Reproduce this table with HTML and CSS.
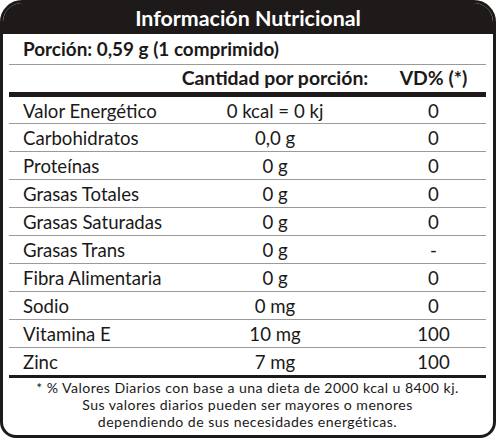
FILE: index.html
```html
<!DOCTYPE html>
<html lang="es">
<head>
<meta charset="utf-8">
<title>Información Nutricional</title>
<link rel="stylesheet" href="styles.css">
</head>
<body>
<div class="label">
  <div class="title">Información Nutricional</div>
  <div class="content">
    <div class="portion">Porción: 0,59 g (1 comprimido)</div>
    <div class="row head">
      <span></span>
      <span class="mid">Cantidad por porción:</span>
      <span class="vd">VD% (*)</span>
    </div>
    <div class="rows">
      <div class="row"><span class="name">Valor Energético</span><span class="mid">0 kcal = 0 kj</span><span class="vd">0</span></div>
      <div class="row"><span class="name">Carbohidratos</span><span class="mid">0,0 g</span><span class="vd">0</span></div>
      <div class="row"><span class="name">Proteínas</span><span class="mid">0 g</span><span class="vd">0</span></div>
      <div class="row"><span class="name">Grasas Totales</span><span class="mid">0 g</span><span class="vd">0</span></div>
      <div class="row"><span class="name">Grasas Saturadas</span><span class="mid">0 g</span><span class="vd">0</span></div>
      <div class="row"><span class="name">Grasas Trans</span><span class="mid">0 g</span><span class="vd">-</span></div>
      <div class="row"><span class="name">Fibra Alimentaria</span><span class="mid">0 g</span><span class="vd">0</span></div>
      <div class="row"><span class="name">Sodio</span><span class="mid">0 mg</span><span class="vd">0</span></div>
      <div class="row"><span class="name">Vitamina E</span><span class="mid">10 mg</span><span class="vd">100</span></div>
      <div class="row"><span class="name">Zinc</span><span class="mid">7 mg</span><span class="vd">100</span></div>
    </div>
    <div class="foot">
      <div>* % Valores Diarios con base a una dieta de 2000 kcal u 8400 kj.</div>
      <div>Sus valores diarios pueden ser mayores o menores</div>
      <div>dependiendo de sus necesidades energéticas.</div>
    </div>
  </div>
</div>
</body>
</html>
```
FILE: styles.css
```css
html, body {
  margin: 0;
  padding: 0;
  background: #ffffff;
}
body {
  font-family: Lato, "Open Sans", sans-serif;
  color: #1b1918;
}
.label {
  box-sizing: border-box;
  width: 496px;
  height: 438px;
  border: 3px solid #1d1a19;
  border-radius: 22px 22px 16px 16px;
  overflow: hidden;
  background: #fff;
}
.title {
  height: 31px;
  background: #1d1a19;
  color: #fff;
  font-weight: 700;
  font-size: 21.4px;
  line-height: 31px;
  text-align: center;
}
.content {
  padding: 0 7px 0 6px;
}
.portion {
  height: 30px;
  line-height: 30px;
  padding-left: 14px;
  font-weight: 700;
  font-size: 18.9px;
  border-bottom: 1px solid #9a9a9a;
}
.row {
  display: grid;
  grid-template-columns: 160px 212px 1fr;
  height: 27px;
  line-height: 28px;
  font-size: 18.6px;
  white-space: nowrap;
}
.row.head {
  font-weight: 700;
  font-size: 19.4px;
  height: 27px;
  line-height: 26px;
  border-bottom: 5px solid #1d1a19;
}
.rows .row {
  border-bottom: 1px solid #9a9a9a;
}
.rows .row:first-child {
  height: 26px;
}
.rows .row:last-child {
  border-bottom: 3px solid #1d1a19;
  height: 27px;
}
.name {
  padding-left: 14px;
}
.mid, .vd {
  text-align: center;
}
.foot {
  padding-top: 1px;
  text-align: center;
  font-size: 14.1px;
  letter-spacing: 0.45px;
  line-height: 17px;
}
```
